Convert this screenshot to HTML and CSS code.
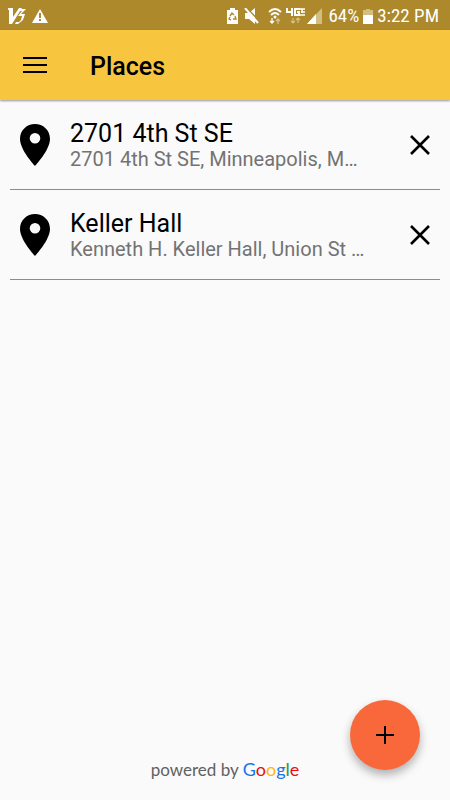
FILE: index.html
```html
<!DOCTYPE html>
<html lang="en">

<head>
    <meta charset="utf-8">
    <meta name="viewport" content="width=device-width, initial-scale=1">
    <title>Places</title>
    <link rel="stylesheet" href="styles.css">
</head>

<body>
    <div class="status-bar">
        <svg width="18" height="16" viewBox="0 0 18 16" fill="#fff">
            <path d="M0 0h5v9l6-9h3L4 16H1V2H0z"/>
            <path d="M10 1h8l-5 5h4l-2 6-5 4H7l1-2h3l2-2 1-4h-4l4-5h-4z"/>
        </svg>
        <svg width="16" height="14" viewBox="0 0 16 14">
            <path d="M8 0L16 14H0z" fill="#fff"/>
            <path d="M7 4h2v5H7zM7 10h2v2H7z" fill="#ad892b"/>
        </svg>
        <div class="status-right">
            <svg width="11" height="16" viewBox="0 0 11 16">
                <path d="M3 0h5v2h3v14H0V2h3z" fill="#fff"/>
                <path d="M3 8l2-3 2 2M8 8l1 3H6M4 12L2 11l1-2" fill="none" stroke="#ad892b" stroke-width="1.4"/>
            </svg>
            <svg class="mute" width="15" height="16" viewBox="0 0 15 16">
                <path d="M1 5h4l6-5v16l-6-5H1z" fill="#fff"/>
                <path d="M2 -1l14 15" stroke="#ad892b" stroke-width="1.5"/>
                <path d="M1 0l13 15" stroke="#fff" stroke-width="2"/>
            </svg>
            <svg class="wifi" width="14" height="16" viewBox="0 0 14 16" fill="none" stroke="#fff">
                <path d="M1 4q6-6 12 0M3 7q4-4 8 0" stroke-width="1.8"/>
                <circle cx="7" cy="9" r="1.5" fill="#fff" stroke="none"/>
                <path d="M4 10v5M2 13l2 2 2-2" stroke-width="1.3"/>
                <path d="M10 16v-5M8 13l2-2 2 2" stroke="#d6c28f" stroke-width="1.3"/>
            </svg>
            <svg width="20" height="16" viewBox="0 0 20 16" fill="none" stroke="#fff" stroke-width="2">
                <path d="M1 0v4h6M6 0v8M14 1H9v6h4V4h-2"/>
                <path d="M14 1h5M16 1v4M19 4h-4M14 7h5" stroke-width="1.500"/>
                <path d="M7 10v5M5 13l2 2 2-2M12 15v-5M10 12l2-2 2 2" stroke="#d6c28f" stroke-width="1.2"/>
            </svg>
            <svg width="15" height="16" viewBox="0 0 15 16">
                <path d="M0 16L15 0v16z" fill="#d2bd85"/>
                <path d="M0 16L9 6v10z" fill="#fff"/>
            </svg>
            <span class="battery-level">64%</span>
            <svg width="10" height="15" viewBox="0 0 10 15">
                <path d="M3 0h4v1h3v14H0V1h3z" fill="#d2bd85"/>
                <path d="M0 6h10v9H0z" fill="#fff"/>
            </svg>
            <span class="clock">3:22 PM</span>
        </div>
    </div>

    <header class="toolbar">
        <button class="icon-button menu-button" type="button" aria-label="Menu">
            <svg width="24" height="16" viewBox="0 0 24 16">
                <path d="M0 1h24M0 8h24M0 15h24" stroke="#000" stroke-width="2"/>
            </svg>
        </button>
        <h1 class="toolbar-title">Places</h1>
    </header>

    <main class="content">
        <ul class="places">
            <li class="place">
                <svg class="pin" width="30" height="42" viewBox="0 0 30 42">
                    <path fill-rule="evenodd" d="M15 0C7 0 0 6 0 15c0 11 15 27 15 27s15-16 15-27C30 6 23 0 15 0zm0 9a5.3 5.3 0 1 1 0 10.6a5.3 5.3 0 1 1 0-10.6z"/>
                </svg>
                <div class="place-text">
                    <div class="place-name">2701 4th St SE</div>
                    <div class="place-address">2701 4th St SE, Minneapolis, MN, USA</div>
                </div>
                <button class="icon-button" type="button" aria-label="Remove 2701 4th St SE">
                    <svg width="20" height="20" viewBox="0 0 20 20">
                        <path d="M1 1l18 18M19 1L1 19" stroke="#000" stroke-width="2.6"/>
                    </svg>
                </button>
            </li>
            <li class="place">
                <svg class="pin" width="30" height="42" viewBox="0 0 30 42">
                    <path fill-rule="evenodd" d="M15 0C7 0 0 6 0 15c0 11 15 27 15 27s15-16 15-27C30 6 23 0 15 0zm0 9a5.3 5.3 0 1 1 0 10.6a5.3 5.3 0 1 1 0-10.6z"/>
                </svg>
                <div class="place-text">
                    <div class="place-name">Keller Hall</div>
                    <div class="place-address">Kenneth H. Keller Hall, Union St SE, Minneapolis, MN, USA</div>
                </div>
                <button class="icon-button" type="button" aria-label="Remove Keller Hall">
                    <svg width="20" height="20" viewBox="0 0 20 20">
                        <path d="M1 1l18 18M19 1L1 19" stroke="#000" stroke-width="2.6"/>
                    </svg>
                </button>
            </li>
        </ul>
    </main>

    <footer class="attribution">
        <span>powered by</span>
        <span class="google"><span class="blue">G</span><span class="red">o</span><span class="yellow">o</span><span class="blue">g</span><span class="green">l</span><span class="red">e</span></span>
    </footer>

    <button class="fab" type="button" aria-label="Add place">
        <svg width="18" height="18" viewBox="0 0 18 18">
            <path d="M9 0v18M0 9h18" stroke="#000" stroke-width="2"/>
        </svg>
    </button>
</body>

</html>
```

FILE: styles.css
```css
* {
    box-sizing: border-box;
}

body {
    margin: 0;
    min-height: 100vh;
    display: flex;
    flex-direction: column;
    background-color: #fafafa;
    color: #000;
    font-family: Roboto, sans-serif;
}

svg {
    display: block;
    flex-shrink: 0;
}

.status-bar {
    height: 30px;
    padding: 2px 11px 0 8px;
    display: flex;
    align-items: center;
    gap: 6px;
    background-color: #ad892b;
    color: #fff;
    font-family: "Roboto Condensed", Roboto, sans-serif;
    font-size: 19px;
    line-height: 24px;
    white-space: nowrap;
}

.status-right {
    margin-left: auto;
    display: flex;
    align-items: center;
    gap: 1px;
}

.mute {
    margin: 0 8px 0 5px;
}

.wifi {
    margin-right: 3px;
}

.battery-level {
    margin: 0 3px 0 5px;
}

.clock {
    margin-left: 3px;
}

.toolbar {
    height: 70px;
    padding: 0 10px;
    display: flex;
    align-items: center;
    background-color: #f7c53e;
    box-shadow: 0 1px 2px rgba(0, 0, 0, 0.4);
}

.toolbar-title {
    margin: 0 0 0 30px;
    padding-top: 3px;
    font-size: 25px;
    font-weight: 500;
    line-height: 30px;
}

.icon-button {
    width: 40px;
    height: 50px;
    padding: 0;
    flex-shrink: 0;
    display: flex;
    justify-content: center;
    align-items: center;
    border: none;
    background: none;
    cursor: pointer;
}

.menu-button {
    width: 50px;
}

.content {
    flex: 1;
}

.places {
    margin: 0;
    padding: 0 10px;
    list-style: none;
}

.place {
    height: 90px;
    display: flex;
    align-items: center;
    border-bottom: 1px solid #8c8c8c;
}

.pin {
    margin: 0 20px 0 10px;
}

.place-text {
    flex: 1;
    min-width: 0;
    margin-right: 30px;
    padding-top: 2px;
}

.place-name {
    font-size: 25px;
    line-height: 26px;
}

.place-address {
    overflow: hidden;
    text-overflow: ellipsis;
    white-space: nowrap;
    font-size: 20px;
    line-height: 24px;
    color: #737373;
}

.attribution {
    padding: 0 0 18px;
    display: flex;
    justify-content: center;
    align-items: baseline;
    gap: 4px;
    color: #616161;
    font-family: Lato, sans-serif;
    font-size: 17px;
    line-height: 24px;
}

.google {
    font-size: 18px;
}

.blue {
    color: #1a73e8;
}

.red {
    color: #e60f0f;
}

.yellow {
    color: #fbb90c;
}

.green {
    color: #249a41;
}

.fab {
    position: fixed;
    right: 30px;
    bottom: 30px;
    width: 70px;
    height: 70px;
    padding: 0;
    display: flex;
    justify-content: center;
    align-items: center;
    border: none;
    border-radius: 50%;
    background-color: #f9683b;
    box-shadow: 0 5px 10px rgba(0, 0, 0, 0.3);
    cursor: pointer;
}
```
